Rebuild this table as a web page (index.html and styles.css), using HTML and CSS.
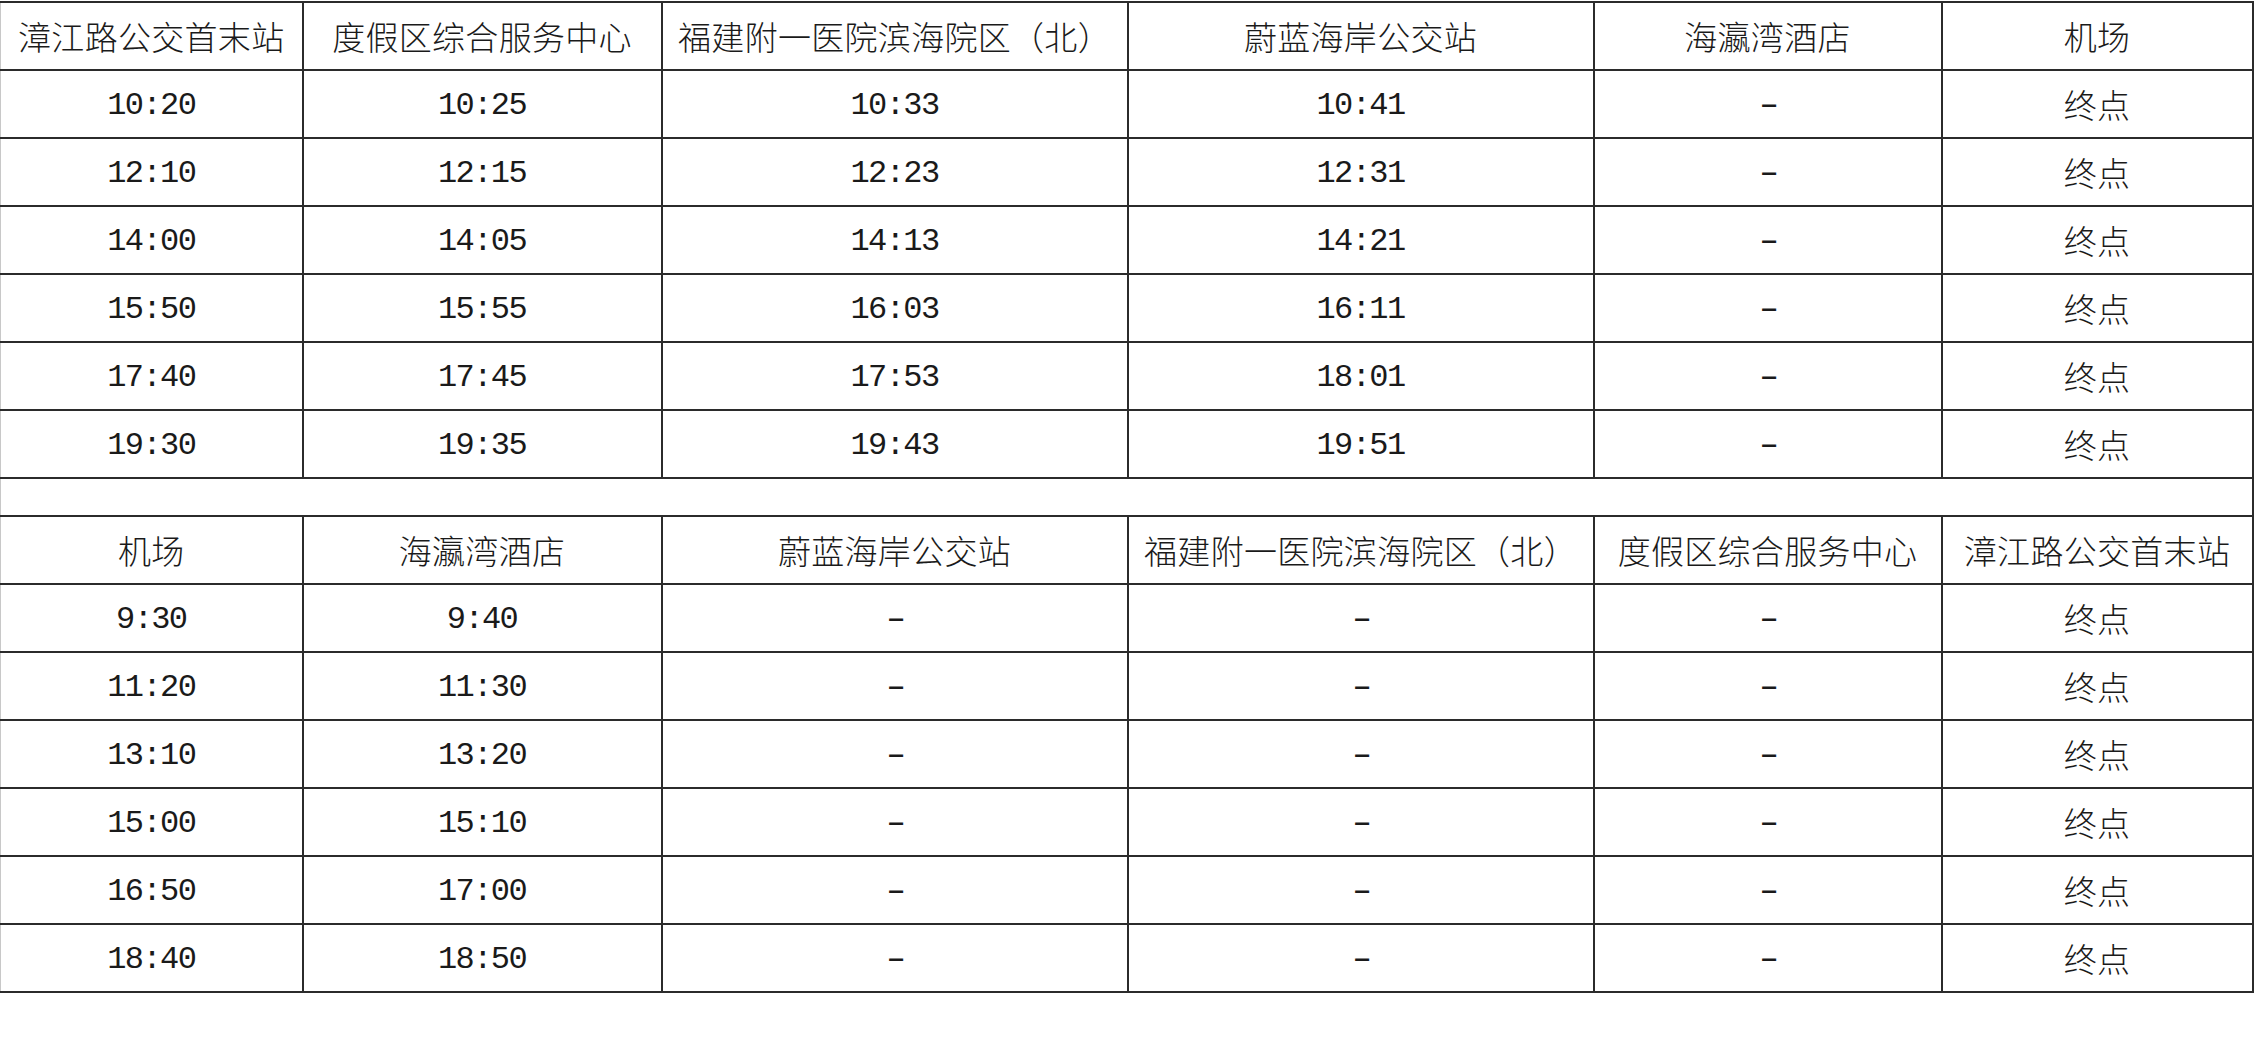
FILE: index.html
```html
<!DOCTYPE html>
<html lang="zh-CN">
<head>
<meta charset="utf-8">
<title>班次时刻表</title>
<link rel="stylesheet" href="styles.css">
</head>
<body>
<table class="timetable">
  <colgroup>
    <col class="c1"><col class="c2"><col class="c3"><col class="c4"><col class="c5"><col class="c6">
  </colgroup>
  <tbody>
    <tr class="head">
      <td>漳江路公交首末站</td><td>度假区综合服务中心</td><td>福建附一医院滨海院区（北）</td><td>蔚蓝海岸公交站</td><td>海瀛湾酒店</td><td>机场</td>
    </tr>
    <tr><td class="t">10:20</td><td class="t">10:25</td><td class="t">10:33</td><td class="t">10:41</td><td class="t"><span class="dash">-</span></td><td>终点</td></tr>
    <tr><td class="t">12:10</td><td class="t">12:15</td><td class="t">12:23</td><td class="t">12:31</td><td class="t"><span class="dash">-</span></td><td>终点</td></tr>
    <tr><td class="t">14:00</td><td class="t">14:05</td><td class="t">14:13</td><td class="t">14:21</td><td class="t"><span class="dash">-</span></td><td>终点</td></tr>
    <tr><td class="t">15:50</td><td class="t">15:55</td><td class="t">16:03</td><td class="t">16:11</td><td class="t"><span class="dash">-</span></td><td>终点</td></tr>
    <tr><td class="t">17:40</td><td class="t">17:45</td><td class="t">17:53</td><td class="t">18:01</td><td class="t"><span class="dash">-</span></td><td>终点</td></tr>
    <tr><td class="t">19:30</td><td class="t">19:35</td><td class="t">19:43</td><td class="t">19:51</td><td class="t"><span class="dash">-</span></td><td>终点</td></tr>
    <tr class="gap"><td colspan="6"></td></tr>
    <tr class="head">
      <td>机场</td><td>海瀛湾酒店</td><td>蔚蓝海岸公交站</td><td>福建附一医院滨海院区（北）</td><td>度假区综合服务中心</td><td>漳江路公交首末站</td>
    </tr>
    <tr><td class="t">9:30</td><td class="t">9:40</td><td class="t"><span class="dash">-</span></td><td class="t"><span class="dash">-</span></td><td class="t"><span class="dash">-</span></td><td>终点</td></tr>
    <tr><td class="t">11:20</td><td class="t">11:30</td><td class="t"><span class="dash">-</span></td><td class="t"><span class="dash">-</span></td><td class="t"><span class="dash">-</span></td><td>终点</td></tr>
    <tr><td class="t">13:10</td><td class="t">13:20</td><td class="t"><span class="dash">-</span></td><td class="t"><span class="dash">-</span></td><td class="t"><span class="dash">-</span></td><td>终点</td></tr>
    <tr><td class="t">15:00</td><td class="t">15:10</td><td class="t"><span class="dash">-</span></td><td class="t"><span class="dash">-</span></td><td class="t"><span class="dash">-</span></td><td>终点</td></tr>
    <tr><td class="t">16:50</td><td class="t">17:00</td><td class="t"><span class="dash">-</span></td><td class="t"><span class="dash">-</span></td><td class="t"><span class="dash">-</span></td><td>终点</td></tr>
    <tr><td class="t">18:40</td><td class="t">18:50</td><td class="t"><span class="dash">-</span></td><td class="t"><span class="dash">-</span></td><td class="t"><span class="dash">-</span></td><td>终点</td></tr>
  </tbody>
</table>
</body>
</html>
```
FILE: styles.css
```css
html, body {
  margin: 0;
  padding: 0;
  background: #ffffff;
}

body {
  padding-top: 1px;
}

.timetable {
  border-collapse: collapse;
  table-layout: fixed;
  width: 2252px;
  font-family: "Noto Sans CJK SC", "Noto Sans", sans-serif;
  font-size: 33px;
  letter-spacing: 0.3px;
  color: #1a1a1a;
}

.c1 { width: 302px; }
.c2 { width: 359px; }
.c3 { width: 466px; }
.c4 { width: 466px; }
.c5 { width: 348px; }
.c6 { width: 311px; }

.timetable td {
  border: 2px solid #2b2b2b;
  height: 66px;
  padding: 0;
  text-align: center;
  vertical-align: middle;
  line-height: 1;
  white-space: nowrap;
  font-weight: 300;
}

.timetable tr td:first-child {
  border-left: 1px solid #c8c8c8;
}

.timetable td.t {
  font-family: "Liberation Mono", "DejaVu Sans Mono", monospace;
  font-size: 32px;
  letter-spacing: -1.6px;
  font-weight: 400;
  height: 62px;
  padding-top: 4px;
}

.dash {
  display: inline-block;
  transform: scaleX(1.6);
}

.timetable .gap td {
  height: 36px;
}
```
